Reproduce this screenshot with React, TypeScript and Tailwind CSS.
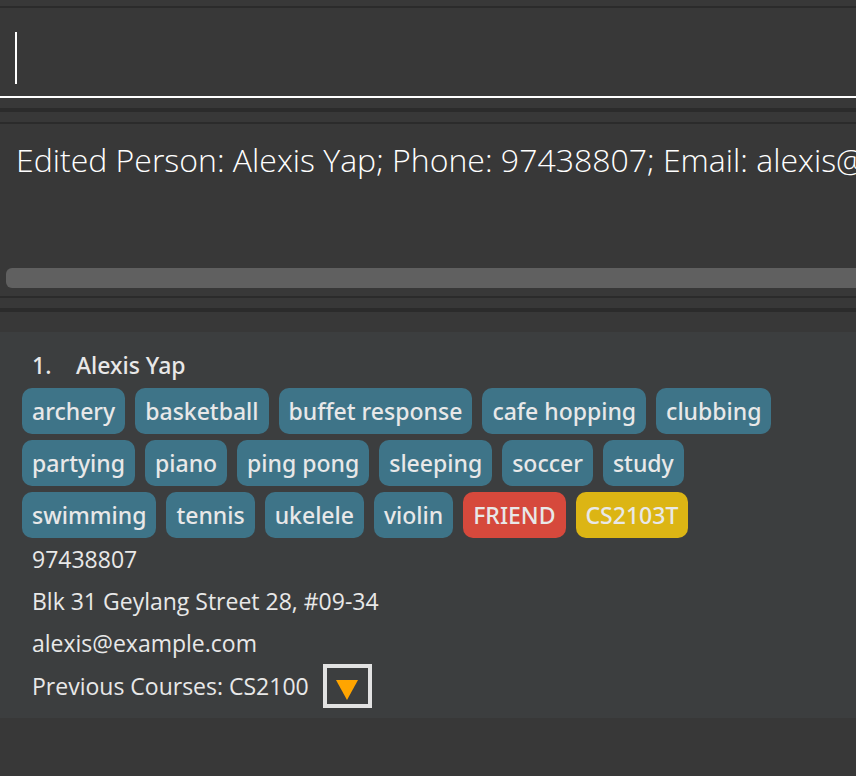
type Tag = { label: string; tone: string };

const BLUE = "bg-[#3e7488]";

const tagRows: Tag[][] = [
  [
    { label: "archery", tone: BLUE },
    { label: "basketball", tone: BLUE },
    { label: "buffet response", tone: BLUE },
    { label: "cafe hopping", tone: BLUE },
    { label: "clubbing", tone: BLUE },
  ],
  [
    { label: "partying", tone: BLUE },
    { label: "piano", tone: BLUE },
    { label: "ping pong", tone: BLUE },
    { label: "sleeping", tone: BLUE },
    { label: "soccer", tone: BLUE },
    { label: "study", tone: BLUE },
  ],
  [
    { label: "swimming", tone: BLUE },
    { label: "tennis", tone: BLUE },
    { label: "ukelele", tone: BLUE },
    { label: "violin", tone: BLUE },
    { label: "FRIEND", tone: "bg-[#d6493c]" },
    { label: "CS2103T", tone: "bg-[#dcb514]" },
  ],
];

function CommandBox() {
  return (
    <section className="mt-1.5 border-t-2 border-b-4 border-[#2b2b2b] pb-2.5">
      <label className="flex h-[90px] items-center border-b-2 border-white px-[15px] pb-3 pt-6">
        <span className="h-[52px] w-0.5 shrink-0 bg-white" />
        <input
          type="text"
          aria-label="Command"
          className="h-[52px] min-w-0 flex-1 bg-transparent text-[32px] font-light text-white outline-none"
        />
      </label>
    </section>
  );
}

function ResultDisplay() {
  return (
    <section className="mt-2.5 border-y-2 border-[#2b2b2b] pb-2 pl-1.5">
      <div className="h-36 overflow-hidden pl-2.5 pt-4">
        <p className="whitespace-nowrap font-['Open_Sans','Noto_Sans',sans-serif] text-[32px] leading-10 font-light text-white">
          Edited Person: Alexis Yap; Phone: 97438807; Email: alexis@example.com
        </p>
      </div>
      <div className="h-5 rounded-l-md bg-[#606060]" />
    </section>
  );
}

function PersonCard() {
  return (
    <article className="bg-[#3c3e3f] pt-3 pb-2.5 pl-[22px] text-[23px] text-[#e8e8e8]">
      <h2 className="flex h-11 items-center px-2.5 pb-0.5 font-medium">
        <span className="w-11">1.</span>
        <span>Alexis Yap</span>
      </h2>
      <ul className="flex flex-col gap-1.5">
        {tagRows.map((row) => (
          <li key={row[0].label}>
            <ul className="flex gap-2.5 whitespace-nowrap">
              {row.map((tag) => (
                <li
                  key={tag.label}
                  className={`flex h-[46px] items-center rounded-[10px] px-2.5 font-medium ${tag.tone}`}
                >
                  {tag.label}
                </li>
              ))}
            </ul>
          </li>
        ))}
      </ul>
      <div className="px-2.5 font-['Open_Sans','Noto_Sans',sans-serif] leading-[42px]">
        <p>97438807</p>
        <p>Blk 31 Geylang Street 28, #09-34</p>
        <p>alexis@example.com</p>
        <div className="flex items-center gap-3.5">
          <span>Previous Courses: CS2100</span>
          <button
            type="button"
            aria-label="Show previous courses"
            className="flex h-11 w-[49px] items-center justify-center border-4 border-[#e2e2e2] pt-2"
          >
            <svg width="22" height="20" viewBox="0 0 22 20" className="fill-[#ffa500]">
              <path d="M0 0H22L11 20Z" />
            </svg>
          </button>
        </div>
      </div>
    </article>
  );
}

export default function App() {
  return (
    <main className="flow-root min-h-screen overflow-hidden bg-[#383838] font-['Noto_Sans','Open_Sans',sans-serif]">
      <CommandBox />
      <ResultDisplay />
      <section className="mt-2.5 border-t-4 border-[#2b2b2b] pt-5">
        <PersonCard />
      </section>
    </main>
  );
}
